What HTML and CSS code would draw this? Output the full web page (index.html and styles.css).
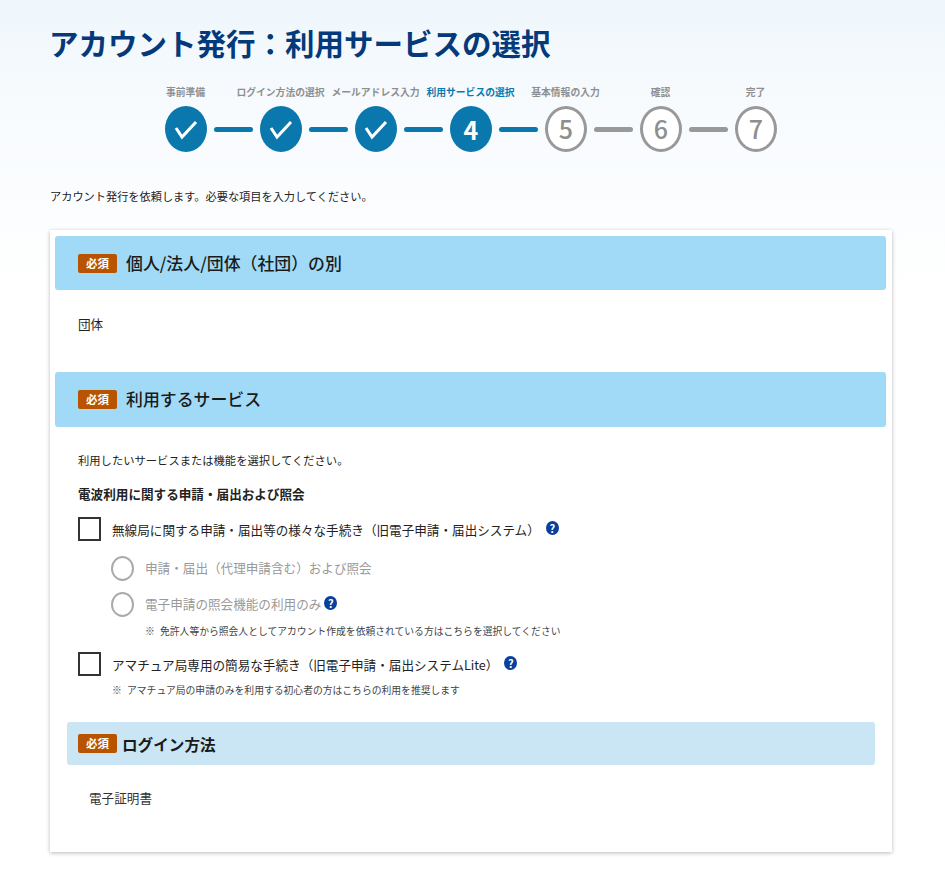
FILE: index.html
```html
<!DOCTYPE html>
<html lang="ja">
<head>
    <meta charset="UTF-8">
    <meta name="viewport" content="width=device-width, initial-scale=1.0">
    <title>アカウント発行：利用サービスの選択</title>
    <link rel="stylesheet" href="styles.css">
</head>
<body>
    <div class="page">
        <h1 class="page-title">アカウント発行：利用サービスの選択</h1>

        <div class="steps">
            <div class="step-labels">
                <span class="step-label">事前準備</span>
                <span class="step-label">ログイン方法の選択</span>
                <span class="step-label">メールアドレス入力</span>
                <span class="step-label current">利用サービスの選択</span>
                <span class="step-label">基本情報の入力</span>
                <span class="step-label">確認</span>
                <span class="step-label">完了</span>
            </div>
            <div class="step-track">
                <div class="step-circle done">
                    <svg class="check" viewBox="0 0 42 46"><polyline points="11,22 17,31 31,16"/></svg>
                </div>
                <div class="step-bar done"></div>
                <div class="step-circle done">
                    <svg class="check" viewBox="0 0 42 46"><polyline points="11,22 17,31 31,16"/></svg>
                </div>
                <div class="step-bar done"></div>
                <div class="step-circle done">
                    <svg class="check" viewBox="0 0 42 46"><polyline points="11,22 17,31 31,16"/></svg>
                </div>
                <div class="step-bar done"></div>
                <div class="step-circle done">4</div>
                <div class="step-bar done"></div>
                <div class="step-circle">5</div>
                <div class="step-bar"></div>
                <div class="step-circle">6</div>
                <div class="step-bar"></div>
                <div class="step-circle">7</div>
            </div>
        </div>

        <p class="lead">アカウント発行を依頼します。必要な項目を入力してください。</p>

        <div class="card">
            <div class="section-head first">
                <span class="badge">必須</span>
                <h2>個人/法人/団体（社団）の別</h2>
            </div>
            <p class="value">団体</p>

            <div class="section-head">
                <span class="badge">必須</span>
                <h2>利用するサービス</h2>
            </div>
            <div class="service-body">
                <p class="service-lead">利用したいサービスまたは機能を選択してください。</p>
                <p class="service-sub">電波利用に関する申請・届出および照会</p>

                <label class="check-row">
                    <span class="checkbox"></span>
                    <span class="check-text">無線局に関する申請・届出等の様々な手続き（旧電子申請・届出システム）</span>
                    <span class="help wide">?</span>
                </label>
                <div class="radio-row">
                    <span class="radio"></span>
                    <span class="radio-text">申請・届出（代理申請含む）および照会</span>
                </div>
                <div class="radio-row next">
                    <span class="radio"></span>
                    <span class="radio-text">電子申請の照会機能の利用のみ</span>
                    <span class="help">?</span>
                </div>
                <p class="note radio-note">※ 免許人等から照会人としてアカウント作成を依頼されている方はこちらを選択してください</p>

                <label class="check-row lite">
                    <span class="checkbox"></span>
                    <span class="check-text">アマチュア局専用の簡易な手続き（旧電子申請・届出システムLite）</span>
                    <span class="help wide">?</span>
                </label>
                <p class="note lite-note">※ アマチュア局の申請のみを利用する初心者の方はこちらの利用を推奨します</p>
            </div>

            <div class="sub-head">
                <span class="badge">必須</span>
                <h3>ログイン方法</h3>
            </div>
            <p class="sub-value">電子証明書</p>
        </div>
    </div>
</body>
</html>
```

FILE: styles.css
```css
body {
    margin: 0;
    font-family: "Noto Sans CJK JP", "Noto Sans", sans-serif;
    color: #222;
    background: linear-gradient(#eff7fc 0, #f8fbfe 120px, #fff 300px);
}

p, h1, h2, h3 {
    margin: 0;
}

.page {
    padding: 0 53px 35px 50px;
}

.page-title {
    padding-top: 18px;
    margin-left: -1px;
    height: 48px;
    line-height: 48px;
    font-size: 29.5px;
    font-weight: 700;
    color: #04397a;
}

/* ステップ表示 */
.steps {
    margin-top: 19px;
    margin-left: 88px;
}

.step-labels {
    display: flex;
}

.step-label {
    width: 95px;
    height: 14px;
    line-height: 14px;
    text-align: center;
    white-space: nowrap;
    font-size: 9.8px;
    font-weight: 700;
    color: #8f8f8f;
}

.step-label.current {
    color: #0a78ad;
}

.step-track {
    display: flex;
    align-items: center;
    margin-top: 7px;
    margin-left: 27px;
}

.step-circle {
    box-sizing: border-box;
    width: 42px;
    height: 46px;
    border: 3px solid #999;
    border-radius: 50%;
    background: #fff;
    color: #8e8e8e;
    font-size: 25px;
    font-weight: 500;
    line-height: 38px;
    text-align: center;
}

.step-circle.done {
    border: 0;
    background: #0a78ad;
    color: #fff;
    font-weight: 700;
    line-height: 46px;
}

.check {
    display: block;
    width: 42px;
    height: 46px;
}

.check polyline {
    fill: none;
    stroke: #fff;
    stroke-width: 3;
}

.step-bar {
    width: 39px;
    height: 5px;
    margin: 0 7px;
    border-radius: 3px;
    background: #999;
}

.step-bar.done {
    background: #0a78ad;
}

.lead {
    margin-top: 36px;
    height: 18px;
    line-height: 17px;
    font-size: 11.2px;
}

/* カード */
.card {
    margin-top: 24px;
    padding: 6px 6px 6px 5px;
    height: 610px;
    background: #fff;
    box-shadow: 0 1px 4px rgba(0, 0, 0, 0.28);
}

.section-head {
    display: flex;
    align-items: center;
    height: 55px;
    padding-left: 23px;
    border-radius: 3px;
    background: #a1daf7;
}

.section-head.first {
    height: 54px;
}

.section-head h2 {
    margin-left: 9px;
    margin-bottom: 2px;
    font-size: 16.9px;
    font-weight: 500;
    color: #1a1a1a;
}

.badge {
    width: 39px;
    height: 19px;
    line-height: 19px;
    border-radius: 2px;
    background: #b85400;
    color: #fff;
    text-align: center;
    font-size: 11.5px;
    font-weight: 700;
}

.value {
    height: 82px;
    padding-left: 23px;
    line-height: 68px;
    font-size: 12.6px;
}

.service-body {
    padding-left: 23px;
}

.service-lead {
    margin-top: 24px;
    height: 18px;
    line-height: 18px;
    font-size: 11.3px;
}

.service-sub {
    margin-top: 16px;
    height: 18px;
    line-height: 18px;
    font-size: 12.6px;
    font-weight: 700;
}

.check-row {
    display: flex;
    align-items: center;
    margin-top: 14px;
    height: 24px;
}

.check-row.lite {
    margin-top: 14px;
}

.checkbox {
    box-sizing: border-box;
    width: 23px;
    height: 24px;
    border: 2px solid #333;
    background: #fff;
}

.check-text {
    margin-left: 11px;
    font-size: 12.6px;
    color: #222;
}

.help {
    width: 13px;
    height: 14px;
    margin-left: 3px;
    margin-bottom: 2px;
    border-radius: 50%;
    background: #0b3f9c;
    color: #fff;
    text-align: center;
    font-size: 11px;
    font-weight: 700;
    line-height: 14px;
}

.help.wide {
    margin-left: 6px;
}

.radio-row {
    display: flex;
    align-items: center;
    margin-top: 14px;
    margin-left: 33px;
    height: 26px;
}

.radio-row.next {
    margin-top: 10px;
}

.radio {
    box-sizing: border-box;
    width: 23px;
    height: 25px;
    border: 2px solid #aaa;
    border-radius: 50%;
}

.radio-text {
    margin-left: 11px;
    margin-bottom: 1px;
    font-size: 12.6px;
    color: #999;
}

.note {
    height: 14px;
    line-height: 14px;
    font-size: 9.8px;
    word-spacing: 3px;
    color: #444;
}

.radio-note {
    margin-top: 7px;
    margin-left: 67px;
}

.lite-note {
    margin-top: 7px;
    margin-left: 34px;
}

.sub-head {
    display: flex;
    align-items: center;
    height: 43px;
    margin: 25px 11px 0 12px;
    padding-left: 11px;
    border-radius: 3px;
    background: #cae5f3;
}

.sub-head h3 {
    margin-left: 5px;
    font-size: 15.6px;
    font-weight: 700;
    color: #1a1a1a;
}

.sub-value {
    margin-top: 23px;
    padding-left: 34px;
    height: 20px;
    line-height: 20px;
    font-size: 12.6px;
    color: #333;
}
```
